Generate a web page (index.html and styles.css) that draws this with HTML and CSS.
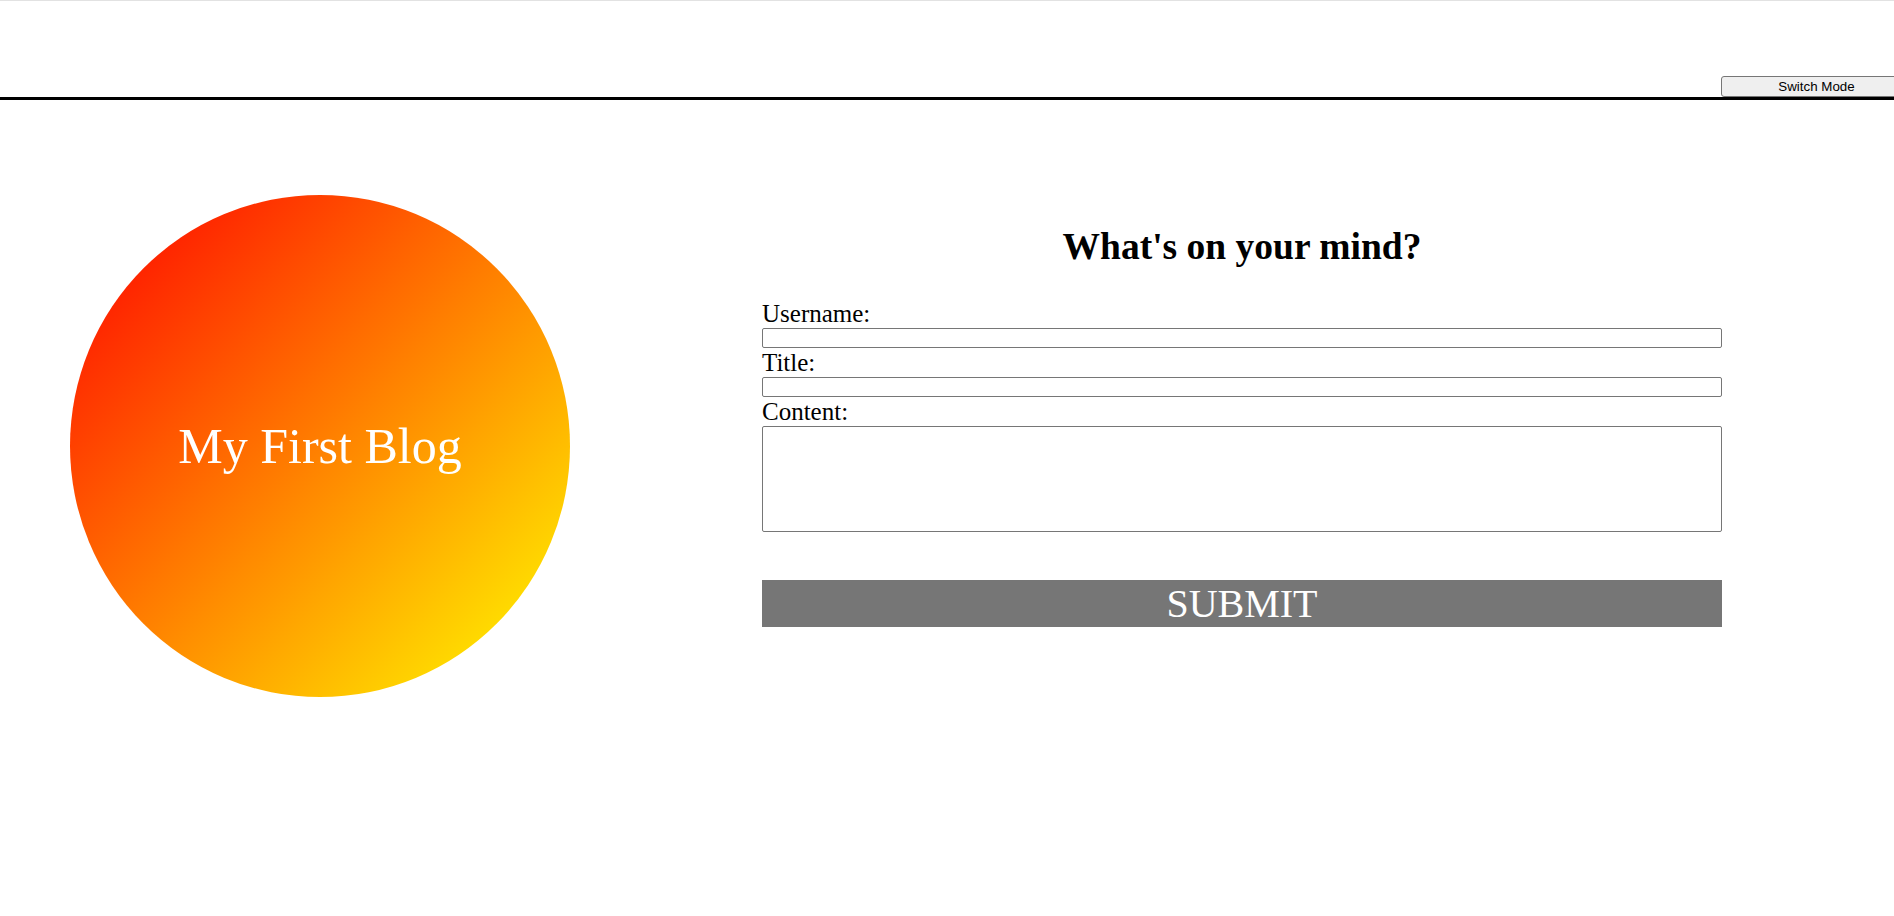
FILE: index.html
```html
<!DOCTYPE html>
<html lang="en">
<head>
<meta charset="utf-8">
<title>My First Blog</title>
<link rel="stylesheet" href="styles.css">
</head>
<body>
<header class="topbar">
  <button class="mode-btn" type="button">Switch Mode</button>
</header>
<main class="page">
  <div class="logo-circle">
    <span class="logo-text">My First Blog</span>
  </div>
  <form class="post-form">
    <h1 class="form-title">What's on your mind?</h1>
    <label class="field-label" for="username">Username:</label>
    <input class="field-input" id="username" type="text">
    <label class="field-label" for="title">Title:</label>
    <input class="field-input" id="title" type="text">
    <label class="field-label" for="content">Content:</label>
    <textarea class="field-area" id="content"></textarea>
    <button class="submit-btn" type="button">SUBMIT</button>
  </form>
</main>
</body>
</html>
```

FILE: styles.css
```css
html, body {
  margin: 0;
  padding: 0;
  background: #ffffff;
  overflow: hidden;
}

body {
  font-family: "Liberation Serif", "Times New Roman", serif;
  color: #000000;
}

.topbar {
  box-sizing: border-box;
  height: 100px;
  border-top: 1px solid #e2e2e2;
  border-bottom: 3px solid #000000;
  display: flex;
  justify-content: flex-end;
  align-items: flex-end;
  overflow: hidden;
}

.mode-btn {
  box-sizing: border-box;
  width: 191px;
  height: 21px;
  margin-right: -18px;
  padding: 1px 6px;
  font-family: "Liberation Sans", Arial, sans-serif;
  font-size: 13.333px;
  color: #000000;
  background: #efefef;
  border: 1px solid #767676;
  border-radius: 3px;
}

.page {
  display: flex;
  align-items: flex-start;
  gap: 192px;
  padding: 95px 0 0 70px;
}

.logo-circle {
  flex: 0 0 auto;
  width: 500px;
  height: 502px;
  border-radius: 50%;
  background: linear-gradient(to bottom right, #ff0000, #ffff00);
  display: flex;
  align-items: center;
  justify-content: center;
}

.logo-text {
  color: #ffffff;
  font-size: 50px;
  line-height: normal;
}

.post-form {
  width: 960px;
  padding-top: 30px;
  display: flex;
  flex-direction: column;
}

.form-title {
  margin: 0 0 31px 0;
  font-size: 37.5px;
  font-weight: bold;
  text-align: center;
  line-height: normal;
}

.field-label {
  display: block;
  font-size: 25px;
  height: 29px;
  line-height: 29px;
}

.field-input {
  box-sizing: border-box;
  display: block;
  width: 960px;
  height: 20px;
  margin: 0;
  border: 1px solid #767676;
  border-radius: 2px;
  padding: 1px 2px;
}

.field-area {
  box-sizing: border-box;
  display: block;
  width: 960px;
  height: 106px;
  margin: 0;
  border: 1px solid #767676;
  border-radius: 2px;
  resize: none;
}

.submit-btn {
  box-sizing: border-box;
  margin-top: 48px;
  width: 960px;
  height: 47px;
  padding: 0;
  background: #767676;
  color: #ffffff;
  border: none;
  font-family: "Liberation Serif", "Times New Roman", serif;
  font-size: 40px;
  line-height: 47px;
}
```
